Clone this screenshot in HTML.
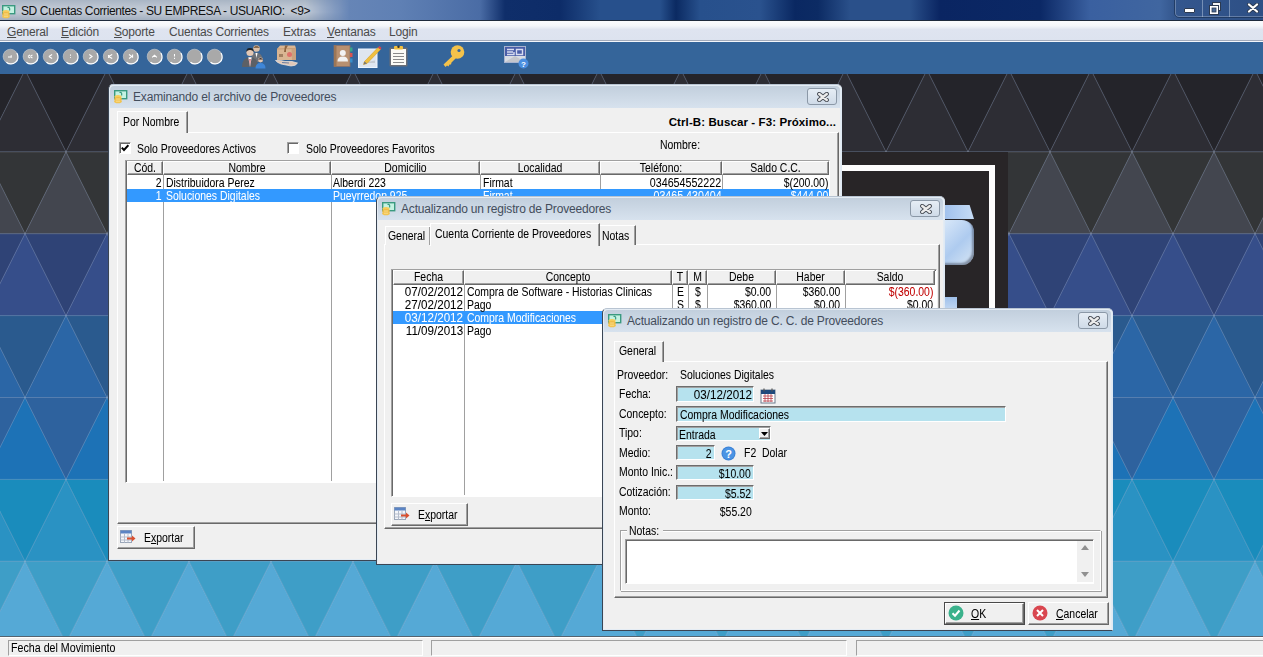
<!DOCTYPE html><html><head><meta charset="utf-8"><style>
*{box-sizing:border-box}
html,body{margin:0;padding:0;width:1263px;height:657px;overflow:hidden;background:#2a4f8f}
body{font-family:"Liberation Sans",sans-serif;font-size:11px;color:#000;position:relative}
.a{position:absolute}
.t{position:absolute;white-space:pre;line-height:13px;letter-spacing:-0.25px}
.d{font-size:12px;letter-spacing:0;transform:scaleX(0.87);transform-origin:0 0;margin-top:1px;-webkit-text-stroke:0.05px currentColor}
.dr{transform-origin:100% 0}
/* title bar */
#tb{left:0;top:0;width:1263px;height:21px;background:linear-gradient(90deg,#6a88b8 0px,#6a88b8 320px,#5f80b4 400px,#4a6ca5 480px,#0f2e6a 505px,#0d2c68 560px,#27508c 600px,#27508c 660px,#0b2a62 676px,#27508c 700px,#2a528e 760px,#0a2862 795px,#0c2b64 818px,#2a508a 850px,#2a508a 910px,#0a2562 940px,#0b2865 1040px,#3a60a0 1090px,#4066a0 1160px,#34578e 1174px,#2d4f85 1263px);border-bottom:1px solid #1e2a3c}
#glow{left:0;top:0;width:350px;height:20px;background:linear-gradient(#a9b5c4 0,#bdc6d2 35%,#c2cad5 60%,#a3afbf 100%);-webkit-mask-image:linear-gradient(90deg,#000 0,#000 305px,rgba(0,0,0,0.5) 325px,transparent 350px)}
#glow2{display:none}
#mb{left:0;top:21px;width:1263px;height:20px;background:linear-gradient(#fafbfd 0%,#f4f6fa 25%,#dfe4f0 45%,#dde3ef 100%);border-bottom:1px solid #a3abbb}
#mb .t{font-size:12px;color:#4a4a4a;letter-spacing:-0.2px}
#tbar{left:0;top:41px;width:1263px;height:33px;background:#35659a;border-top:1px solid #f4f6fa}
.circ{position:absolute;width:15px;height:15px;border-radius:50%;background:#a3a3a3;border:1px solid #e8e8e8;top:49px}
#sb{left:0;top:636px;width:1263px;height:21px;background:#f0f0f0;border-top:1px solid #55636f;box-shadow:inset 0 1px 0 #fff}
.sp{position:absolute;top:3px;height:16px;border:1px solid;border-color:#a0a0a0 #fff #fff #a0a0a0}
/* windows */
.win{position:absolute;background:#f0f0f0;border:1px solid #3b4553;border-right-color:#dfe9f3;border-top-color:#b8c4d2;border-radius:5px 5px 0 0;box-shadow:inset 0 0 0 1px #e4ecf4}
.wt{position:absolute;left:1px;top:1px;right:1px;height:22px;background:linear-gradient(#c2cfdd,#d7e2ee);border-radius:4px 4px 0 0}
.wt .t{font-size:12px;color:#434d5c;left:23px;top:5px;letter-spacing:-0.17px}
.xb{position:absolute;width:30px;height:17px;border:1px solid #8b98a7;border-radius:3px;background:linear-gradient(#e6edf5,#cfdbe8)}
.xb svg{position:absolute;left:8.5px;top:3px}
.ico{position:absolute;left:4px;top:4px;width:16px;height:15px}
.tab{position:absolute;border:1px solid;border-color:#fff #696969 transparent #fff;border-bottom:none;background:#f0f0f0;box-shadow:inset -1px 0 0 #a0a0a0}
.tab .t{top:3px}
.panel{position:absolute;border:1px solid;border-color:#fff #696969 #696969 #fff;box-shadow:inset -1px -1px 0 #a0a0a0}
.grid{position:absolute;background:#fff;border:1px solid;border-color:#a0a0a0 #fff #fff #a0a0a0;box-shadow:inset 1px 1px 0 #696969}
.hd{position:absolute;top:0;height:15px;background:#f0f0f0;border:1px solid;border-color:#fff #696969 #696969 #fff;box-shadow:inset -1px -1px 0 #a0a0a0;text-align:center}
.hd .t, .hd{line-height:13px}
.vl{position:absolute;width:1px;background:#a0a0a0}
.sel{position:absolute;background:#3399ff}
.btn{position:absolute;background:#f0f0f0;border:1px solid;border-color:#fff #696969 #696969 #fff;box-shadow:inset -1px -1px 0 #a0a0a0}
.chk{position:absolute;width:12px;height:12px;background:#fff;border:1px solid;border-color:#a0a0a0 #fff #fff #a0a0a0;box-shadow:inset 1px 1px 0 #696969}
.inp{position:absolute;background:#b6e2ee;border:1px solid;border-color:#6d6d6d #fff #fff #6d6d6d;box-shadow:inset 1px 1px 0 #a0a0a0}
.r{text-align:right}
</style></head><body><svg width="1263" height="657" style="position:absolute;left:0;top:0"><polygon points="-139.0,69.9 -98.0,151.8 -180.0,151.8" fill="#2d2d34"/><polygon points="-139.0,69.9 -57.0,69.9 -98.0,151.8" fill="#24242a"/><polygon points="-57.0,69.9 -16.0,151.8 -98.0,151.8" fill="#2d2d34"/><polygon points="-57.0,69.9 25.0,69.9 -16.0,151.8" fill="#24242a"/><polygon points="25.0,69.9 66.0,151.8 -16.0,151.8" fill="#2d2d34"/><polygon points="25.0,69.9 107.0,69.9 66.0,151.8" fill="#24242a"/><polygon points="107.0,69.9 148.0,151.8 66.0,151.8" fill="#2d2d34"/><polygon points="107.0,69.9 189.0,69.9 148.0,151.8" fill="#24242a"/><polygon points="189.0,69.9 230.0,151.8 148.0,151.8" fill="#2d2d34"/><polygon points="189.0,69.9 271.0,69.9 230.0,151.8" fill="#24242a"/><polygon points="271.0,69.9 312.0,151.8 230.0,151.8" fill="#2d2d34"/><polygon points="271.0,69.9 353.0,69.9 312.0,151.8" fill="#24242a"/><polygon points="353.0,69.9 394.0,151.8 312.0,151.8" fill="#2d2d34"/><polygon points="353.0,69.9 435.0,69.9 394.0,151.8" fill="#24242a"/><polygon points="435.0,69.9 476.0,151.8 394.0,151.8" fill="#2d2d34"/><polygon points="435.0,69.9 517.0,69.9 476.0,151.8" fill="#24242a"/><polygon points="517.0,69.9 558.0,151.8 476.0,151.8" fill="#2d2d34"/><polygon points="517.0,69.9 599.0,69.9 558.0,151.8" fill="#24242a"/><polygon points="599.0,69.9 640.0,151.8 558.0,151.8" fill="#2d2d34"/><polygon points="599.0,69.9 681.0,69.9 640.0,151.8" fill="#24242a"/><polygon points="681.0,69.9 722.0,151.8 640.0,151.8" fill="#2d2d34"/><polygon points="681.0,69.9 763.0,69.9 722.0,151.8" fill="#24242a"/><polygon points="763.0,69.9 804.0,151.8 722.0,151.8" fill="#2d2d34"/><polygon points="763.0,69.9 845.0,69.9 804.0,151.8" fill="#24242a"/><polygon points="845.0,69.9 886.0,151.8 804.0,151.8" fill="#2d2d34"/><polygon points="845.0,69.9 927.0,69.9 886.0,151.8" fill="#24242a"/><polygon points="927.0,69.9 968.0,151.8 886.0,151.8" fill="#2d2d34"/><polygon points="927.0,69.9 1009.0,69.9 968.0,151.8" fill="#24242a"/><polygon points="1009.0,69.9 1050.0,151.8 968.0,151.8" fill="#2d2d34"/><polygon points="1009.0,69.9 1091.0,69.9 1050.0,151.8" fill="#24242a"/><polygon points="1091.0,69.9 1132.0,151.8 1050.0,151.8" fill="#2d2d34"/><polygon points="1091.0,69.9 1173.0,69.9 1132.0,151.8" fill="#24242a"/><polygon points="1173.0,69.9 1214.0,151.8 1132.0,151.8" fill="#2d2d34"/><polygon points="1173.0,69.9 1255.0,69.9 1214.0,151.8" fill="#24242a"/><polygon points="1255.0,69.9 1296.0,151.8 1214.0,151.8" fill="#2d2d34"/><polygon points="1255.0,69.9 1337.0,69.9 1296.0,151.8" fill="#24242a"/><polygon points="1337.0,69.9 1378.0,151.8 1296.0,151.8" fill="#2d2d34"/><polygon points="1337.0,69.9 1419.0,69.9 1378.0,151.8" fill="#24242a"/><polygon points="1419.0,69.9 1460.0,151.8 1378.0,151.8" fill="#2d2d34"/><polygon points="1419.0,69.9 1501.0,69.9 1460.0,151.8" fill="#24242a"/><polygon points="-98.0,151.8 -57.0,233.7 -139.0,233.7" fill="#43464f"/><polygon points="-98.0,151.8 -16.0,151.8 -57.0,233.7" fill="#333537"/><polygon points="-16.0,151.8 25.0,233.7 -57.0,233.7" fill="#43464f"/><polygon points="-16.0,151.8 66.0,151.8 25.0,233.7" fill="#333537"/><polygon points="66.0,151.8 107.0,233.7 25.0,233.7" fill="#43464f"/><polygon points="66.0,151.8 148.0,151.8 107.0,233.7" fill="#333537"/><polygon points="148.0,151.8 189.0,233.7 107.0,233.7" fill="#43464f"/><polygon points="148.0,151.8 230.0,151.8 189.0,233.7" fill="#333537"/><polygon points="230.0,151.8 271.0,233.7 189.0,233.7" fill="#43464f"/><polygon points="230.0,151.8 312.0,151.8 271.0,233.7" fill="#333537"/><polygon points="312.0,151.8 353.0,233.7 271.0,233.7" fill="#43464f"/><polygon points="312.0,151.8 394.0,151.8 353.0,233.7" fill="#333537"/><polygon points="394.0,151.8 435.0,233.7 353.0,233.7" fill="#43464f"/><polygon points="394.0,151.8 476.0,151.8 435.0,233.7" fill="#333537"/><polygon points="476.0,151.8 517.0,233.7 435.0,233.7" fill="#43464f"/><polygon points="476.0,151.8 558.0,151.8 517.0,233.7" fill="#333537"/><polygon points="558.0,151.8 599.0,233.7 517.0,233.7" fill="#43464f"/><polygon points="558.0,151.8 640.0,151.8 599.0,233.7" fill="#333537"/><polygon points="640.0,151.8 681.0,233.7 599.0,233.7" fill="#43464f"/><polygon points="640.0,151.8 722.0,151.8 681.0,233.7" fill="#333537"/><polygon points="722.0,151.8 763.0,233.7 681.0,233.7" fill="#43464f"/><polygon points="722.0,151.8 804.0,151.8 763.0,233.7" fill="#333537"/><polygon points="804.0,151.8 845.0,233.7 763.0,233.7" fill="#43464f"/><polygon points="804.0,151.8 886.0,151.8 845.0,233.7" fill="#333537"/><polygon points="886.0,151.8 927.0,233.7 845.0,233.7" fill="#43464f"/><polygon points="886.0,151.8 968.0,151.8 927.0,233.7" fill="#333537"/><polygon points="968.0,151.8 1009.0,233.7 927.0,233.7" fill="#43464f"/><polygon points="968.0,151.8 1050.0,151.8 1009.0,233.7" fill="#333537"/><polygon points="1050.0,151.8 1091.0,233.7 1009.0,233.7" fill="#43464f"/><polygon points="1050.0,151.8 1132.0,151.8 1091.0,233.7" fill="#333537"/><polygon points="1132.0,151.8 1173.0,233.7 1091.0,233.7" fill="#43464f"/><polygon points="1132.0,151.8 1214.0,151.8 1173.0,233.7" fill="#333537"/><polygon points="1214.0,151.8 1255.0,233.7 1173.0,233.7" fill="#43464f"/><polygon points="1214.0,151.8 1296.0,151.8 1255.0,233.7" fill="#333537"/><polygon points="1296.0,151.8 1337.0,233.7 1255.0,233.7" fill="#43464f"/><polygon points="1296.0,151.8 1378.0,151.8 1337.0,233.7" fill="#333537"/><polygon points="1378.0,151.8 1419.0,233.7 1337.0,233.7" fill="#43464f"/><polygon points="1378.0,151.8 1460.0,151.8 1419.0,233.7" fill="#333537"/><polygon points="1460.0,151.8 1501.0,233.7 1419.0,233.7" fill="#43464f"/><polygon points="1460.0,151.8 1542.0,151.8 1501.0,233.7" fill="#333537"/><polygon points="-139.0,233.7 -98.0,315.6 -180.0,315.6" fill="#364e8a"/><polygon points="-139.0,233.7 -57.0,233.7 -98.0,315.6" fill="#2f4376"/><polygon points="-57.0,233.7 -16.0,315.6 -98.0,315.6" fill="#364e8a"/><polygon points="-57.0,233.7 25.0,233.7 -16.0,315.6" fill="#2f4376"/><polygon points="25.0,233.7 66.0,315.6 -16.0,315.6" fill="#364e8a"/><polygon points="25.0,233.7 107.0,233.7 66.0,315.6" fill="#2f4376"/><polygon points="107.0,233.7 148.0,315.6 66.0,315.6" fill="#364e8a"/><polygon points="107.0,233.7 189.0,233.7 148.0,315.6" fill="#2f4376"/><polygon points="189.0,233.7 230.0,315.6 148.0,315.6" fill="#364e8a"/><polygon points="189.0,233.7 271.0,233.7 230.0,315.6" fill="#2f4376"/><polygon points="271.0,233.7 312.0,315.6 230.0,315.6" fill="#364e8a"/><polygon points="271.0,233.7 353.0,233.7 312.0,315.6" fill="#2f4376"/><polygon points="353.0,233.7 394.0,315.6 312.0,315.6" fill="#364e8a"/><polygon points="353.0,233.7 435.0,233.7 394.0,315.6" fill="#2f4376"/><polygon points="435.0,233.7 476.0,315.6 394.0,315.6" fill="#364e8a"/><polygon points="435.0,233.7 517.0,233.7 476.0,315.6" fill="#2f4376"/><polygon points="517.0,233.7 558.0,315.6 476.0,315.6" fill="#364e8a"/><polygon points="517.0,233.7 599.0,233.7 558.0,315.6" fill="#2f4376"/><polygon points="599.0,233.7 640.0,315.6 558.0,315.6" fill="#364e8a"/><polygon points="599.0,233.7 681.0,233.7 640.0,315.6" fill="#2f4376"/><polygon points="681.0,233.7 722.0,315.6 640.0,315.6" fill="#364e8a"/><polygon points="681.0,233.7 763.0,233.7 722.0,315.6" fill="#2f4376"/><polygon points="763.0,233.7 804.0,315.6 722.0,315.6" fill="#364e8a"/><polygon points="763.0,233.7 845.0,233.7 804.0,315.6" fill="#2f4376"/><polygon points="845.0,233.7 886.0,315.6 804.0,315.6" fill="#364e8a"/><polygon points="845.0,233.7 927.0,233.7 886.0,315.6" fill="#2f4376"/><polygon points="927.0,233.7 968.0,315.6 886.0,315.6" fill="#364e8a"/><polygon points="927.0,233.7 1009.0,233.7 968.0,315.6" fill="#2f4376"/><polygon points="1009.0,233.7 1050.0,315.6 968.0,315.6" fill="#364e8a"/><polygon points="1009.0,233.7 1091.0,233.7 1050.0,315.6" fill="#2f4376"/><polygon points="1091.0,233.7 1132.0,315.6 1050.0,315.6" fill="#364e8a"/><polygon points="1091.0,233.7 1173.0,233.7 1132.0,315.6" fill="#2f4376"/><polygon points="1173.0,233.7 1214.0,315.6 1132.0,315.6" fill="#364e8a"/><polygon points="1173.0,233.7 1255.0,233.7 1214.0,315.6" fill="#2f4376"/><polygon points="1255.0,233.7 1296.0,315.6 1214.0,315.6" fill="#364e8a"/><polygon points="1255.0,233.7 1337.0,233.7 1296.0,315.6" fill="#2f4376"/><polygon points="1337.0,233.7 1378.0,315.6 1296.0,315.6" fill="#364e8a"/><polygon points="1337.0,233.7 1419.0,233.7 1378.0,315.6" fill="#2f4376"/><polygon points="1419.0,233.7 1460.0,315.6 1378.0,315.6" fill="#364e8a"/><polygon points="1419.0,233.7 1501.0,233.7 1460.0,315.6" fill="#2f4376"/><polygon points="-98.0,315.6 -57.0,397.5 -139.0,397.5" fill="#2b66a6"/><polygon points="-98.0,315.6 -16.0,315.6 -57.0,397.5" fill="#2a5a8e"/><polygon points="-16.0,315.6 25.0,397.5 -57.0,397.5" fill="#2b66a6"/><polygon points="-16.0,315.6 66.0,315.6 25.0,397.5" fill="#2a5a8e"/><polygon points="66.0,315.6 107.0,397.5 25.0,397.5" fill="#2b66a6"/><polygon points="66.0,315.6 148.0,315.6 107.0,397.5" fill="#2a5a8e"/><polygon points="148.0,315.6 189.0,397.5 107.0,397.5" fill="#2b66a6"/><polygon points="148.0,315.6 230.0,315.6 189.0,397.5" fill="#2a5a8e"/><polygon points="230.0,315.6 271.0,397.5 189.0,397.5" fill="#2b66a6"/><polygon points="230.0,315.6 312.0,315.6 271.0,397.5" fill="#2a5a8e"/><polygon points="312.0,315.6 353.0,397.5 271.0,397.5" fill="#2b66a6"/><polygon points="312.0,315.6 394.0,315.6 353.0,397.5" fill="#2a5a8e"/><polygon points="394.0,315.6 435.0,397.5 353.0,397.5" fill="#2b66a6"/><polygon points="394.0,315.6 476.0,315.6 435.0,397.5" fill="#2a5a8e"/><polygon points="476.0,315.6 517.0,397.5 435.0,397.5" fill="#2b66a6"/><polygon points="476.0,315.6 558.0,315.6 517.0,397.5" fill="#2a5a8e"/><polygon points="558.0,315.6 599.0,397.5 517.0,397.5" fill="#2b66a6"/><polygon points="558.0,315.6 640.0,315.6 599.0,397.5" fill="#2a5a8e"/><polygon points="640.0,315.6 681.0,397.5 599.0,397.5" fill="#2b66a6"/><polygon points="640.0,315.6 722.0,315.6 681.0,397.5" fill="#2a5a8e"/><polygon points="722.0,315.6 763.0,397.5 681.0,397.5" fill="#2b66a6"/><polygon points="722.0,315.6 804.0,315.6 763.0,397.5" fill="#2a5a8e"/><polygon points="804.0,315.6 845.0,397.5 763.0,397.5" fill="#2b66a6"/><polygon points="804.0,315.6 886.0,315.6 845.0,397.5" fill="#2a5a8e"/><polygon points="886.0,315.6 927.0,397.5 845.0,397.5" fill="#2b66a6"/><polygon points="886.0,315.6 968.0,315.6 927.0,397.5" fill="#2a5a8e"/><polygon points="968.0,315.6 1009.0,397.5 927.0,397.5" fill="#2b66a6"/><polygon points="968.0,315.6 1050.0,315.6 1009.0,397.5" fill="#2a5a8e"/><polygon points="1050.0,315.6 1091.0,397.5 1009.0,397.5" fill="#2b66a6"/><polygon points="1050.0,315.6 1132.0,315.6 1091.0,397.5" fill="#2a5a8e"/><polygon points="1132.0,315.6 1173.0,397.5 1091.0,397.5" fill="#2b66a6"/><polygon points="1132.0,315.6 1214.0,315.6 1173.0,397.5" fill="#2a5a8e"/><polygon points="1214.0,315.6 1255.0,397.5 1173.0,397.5" fill="#2b66a6"/><polygon points="1214.0,315.6 1296.0,315.6 1255.0,397.5" fill="#2a5a8e"/><polygon points="1296.0,315.6 1337.0,397.5 1255.0,397.5" fill="#2b66a6"/><polygon points="1296.0,315.6 1378.0,315.6 1337.0,397.5" fill="#2a5a8e"/><polygon points="1378.0,315.6 1419.0,397.5 1337.0,397.5" fill="#2b66a6"/><polygon points="1378.0,315.6 1460.0,315.6 1419.0,397.5" fill="#2a5a8e"/><polygon points="1460.0,315.6 1501.0,397.5 1419.0,397.5" fill="#2b66a6"/><polygon points="1460.0,315.6 1542.0,315.6 1501.0,397.5" fill="#2a5a8e"/><polygon points="-139.0,397.5 -98.0,479.4 -180.0,479.4" fill="#1d72b6"/><polygon points="-139.0,397.5 -57.0,397.5 -98.0,479.4" fill="#2e629e"/><polygon points="-57.0,397.5 -16.0,479.4 -98.0,479.4" fill="#1d72b6"/><polygon points="-57.0,397.5 25.0,397.5 -16.0,479.4" fill="#2e629e"/><polygon points="25.0,397.5 66.0,479.4 -16.0,479.4" fill="#1d72b6"/><polygon points="25.0,397.5 107.0,397.5 66.0,479.4" fill="#2e629e"/><polygon points="107.0,397.5 148.0,479.4 66.0,479.4" fill="#1d72b6"/><polygon points="107.0,397.5 189.0,397.5 148.0,479.4" fill="#2e629e"/><polygon points="189.0,397.5 230.0,479.4 148.0,479.4" fill="#1d72b6"/><polygon points="189.0,397.5 271.0,397.5 230.0,479.4" fill="#2e629e"/><polygon points="271.0,397.5 312.0,479.4 230.0,479.4" fill="#1d72b6"/><polygon points="271.0,397.5 353.0,397.5 312.0,479.4" fill="#2e629e"/><polygon points="353.0,397.5 394.0,479.4 312.0,479.4" fill="#1d72b6"/><polygon points="353.0,397.5 435.0,397.5 394.0,479.4" fill="#2e629e"/><polygon points="435.0,397.5 476.0,479.4 394.0,479.4" fill="#1d72b6"/><polygon points="435.0,397.5 517.0,397.5 476.0,479.4" fill="#2e629e"/><polygon points="517.0,397.5 558.0,479.4 476.0,479.4" fill="#1d72b6"/><polygon points="517.0,397.5 599.0,397.5 558.0,479.4" fill="#2e629e"/><polygon points="599.0,397.5 640.0,479.4 558.0,479.4" fill="#1d72b6"/><polygon points="599.0,397.5 681.0,397.5 640.0,479.4" fill="#2e629e"/><polygon points="681.0,397.5 722.0,479.4 640.0,479.4" fill="#1d72b6"/><polygon points="681.0,397.5 763.0,397.5 722.0,479.4" fill="#2e629e"/><polygon points="763.0,397.5 804.0,479.4 722.0,479.4" fill="#1d72b6"/><polygon points="763.0,397.5 845.0,397.5 804.0,479.4" fill="#2e629e"/><polygon points="845.0,397.5 886.0,479.4 804.0,479.4" fill="#1d72b6"/><polygon points="845.0,397.5 927.0,397.5 886.0,479.4" fill="#2e629e"/><polygon points="927.0,397.5 968.0,479.4 886.0,479.4" fill="#1d72b6"/><polygon points="927.0,397.5 1009.0,397.5 968.0,479.4" fill="#2e629e"/><polygon points="1009.0,397.5 1050.0,479.4 968.0,479.4" fill="#1d72b6"/><polygon points="1009.0,397.5 1091.0,397.5 1050.0,479.4" fill="#2e629e"/><polygon points="1091.0,397.5 1132.0,479.4 1050.0,479.4" fill="#1d72b6"/><polygon points="1091.0,397.5 1173.0,397.5 1132.0,479.4" fill="#2e629e"/><polygon points="1173.0,397.5 1214.0,479.4 1132.0,479.4" fill="#1d72b6"/><polygon points="1173.0,397.5 1255.0,397.5 1214.0,479.4" fill="#2e629e"/><polygon points="1255.0,397.5 1296.0,479.4 1214.0,479.4" fill="#1d72b6"/><polygon points="1255.0,397.5 1337.0,397.5 1296.0,479.4" fill="#2e629e"/><polygon points="1337.0,397.5 1378.0,479.4 1296.0,479.4" fill="#1d72b6"/><polygon points="1337.0,397.5 1419.0,397.5 1378.0,479.4" fill="#2e629e"/><polygon points="1419.0,397.5 1460.0,479.4 1378.0,479.4" fill="#1d72b6"/><polygon points="1419.0,397.5 1501.0,397.5 1460.0,479.4" fill="#2e629e"/><polygon points="-98.0,479.4 -57.0,561.3 -139.0,561.3" fill="#2a92c3"/><polygon points="-98.0,479.4 -16.0,479.4 -57.0,561.3" fill="#1a8cbc"/><polygon points="-16.0,479.4 25.0,561.3 -57.0,561.3" fill="#2a92c3"/><polygon points="-16.0,479.4 66.0,479.4 25.0,561.3" fill="#1a8cbc"/><polygon points="66.0,479.4 107.0,561.3 25.0,561.3" fill="#2a92c3"/><polygon points="66.0,479.4 148.0,479.4 107.0,561.3" fill="#1a8cbc"/><polygon points="148.0,479.4 189.0,561.3 107.0,561.3" fill="#2a92c3"/><polygon points="148.0,479.4 230.0,479.4 189.0,561.3" fill="#1a8cbc"/><polygon points="230.0,479.4 271.0,561.3 189.0,561.3" fill="#2a92c3"/><polygon points="230.0,479.4 312.0,479.4 271.0,561.3" fill="#1a8cbc"/><polygon points="312.0,479.4 353.0,561.3 271.0,561.3" fill="#2a92c3"/><polygon points="312.0,479.4 394.0,479.4 353.0,561.3" fill="#1a8cbc"/><polygon points="394.0,479.4 435.0,561.3 353.0,561.3" fill="#2a92c3"/><polygon points="394.0,479.4 476.0,479.4 435.0,561.3" fill="#1a8cbc"/><polygon points="476.0,479.4 517.0,561.3 435.0,561.3" fill="#2a92c3"/><polygon points="476.0,479.4 558.0,479.4 517.0,561.3" fill="#1a8cbc"/><polygon points="558.0,479.4 599.0,561.3 517.0,561.3" fill="#2a92c3"/><polygon points="558.0,479.4 640.0,479.4 599.0,561.3" fill="#1a8cbc"/><polygon points="640.0,479.4 681.0,561.3 599.0,561.3" fill="#2a92c3"/><polygon points="640.0,479.4 722.0,479.4 681.0,561.3" fill="#1a8cbc"/><polygon points="722.0,479.4 763.0,561.3 681.0,561.3" fill="#2a92c3"/><polygon points="722.0,479.4 804.0,479.4 763.0,561.3" fill="#1a8cbc"/><polygon points="804.0,479.4 845.0,561.3 763.0,561.3" fill="#2a92c3"/><polygon points="804.0,479.4 886.0,479.4 845.0,561.3" fill="#1a8cbc"/><polygon points="886.0,479.4 927.0,561.3 845.0,561.3" fill="#2a92c3"/><polygon points="886.0,479.4 968.0,479.4 927.0,561.3" fill="#1a8cbc"/><polygon points="968.0,479.4 1009.0,561.3 927.0,561.3" fill="#2a92c3"/><polygon points="968.0,479.4 1050.0,479.4 1009.0,561.3" fill="#1a8cbc"/><polygon points="1050.0,479.4 1091.0,561.3 1009.0,561.3" fill="#2a92c3"/><polygon points="1050.0,479.4 1132.0,479.4 1091.0,561.3" fill="#1a8cbc"/><polygon points="1132.0,479.4 1173.0,561.3 1091.0,561.3" fill="#2a92c3"/><polygon points="1132.0,479.4 1214.0,479.4 1173.0,561.3" fill="#1a8cbc"/><polygon points="1214.0,479.4 1255.0,561.3 1173.0,561.3" fill="#2a92c3"/><polygon points="1214.0,479.4 1296.0,479.4 1255.0,561.3" fill="#1a8cbc"/><polygon points="1296.0,479.4 1337.0,561.3 1255.0,561.3" fill="#2a92c3"/><polygon points="1296.0,479.4 1378.0,479.4 1337.0,561.3" fill="#1a8cbc"/><polygon points="1378.0,479.4 1419.0,561.3 1337.0,561.3" fill="#2a92c3"/><polygon points="1378.0,479.4 1460.0,479.4 1419.0,561.3" fill="#1a8cbc"/><polygon points="1460.0,479.4 1501.0,561.3 1419.0,561.3" fill="#2a92c3"/><polygon points="1460.0,479.4 1542.0,479.4 1501.0,561.3" fill="#1a8cbc"/><polygon points="-139.0,561.3 -98.0,643.2 -180.0,643.2" fill="#55a9d6"/><polygon points="-139.0,561.3 -57.0,561.3 -98.0,643.2" fill="#3e9ec7"/><polygon points="-57.0,561.3 -16.0,643.2 -98.0,643.2" fill="#55a9d6"/><polygon points="-57.0,561.3 25.0,561.3 -16.0,643.2" fill="#3e9ec7"/><polygon points="25.0,561.3 66.0,643.2 -16.0,643.2" fill="#55a9d6"/><polygon points="25.0,561.3 107.0,561.3 66.0,643.2" fill="#3e9ec7"/><polygon points="107.0,561.3 148.0,643.2 66.0,643.2" fill="#55a9d6"/><polygon points="107.0,561.3 189.0,561.3 148.0,643.2" fill="#3e9ec7"/><polygon points="189.0,561.3 230.0,643.2 148.0,643.2" fill="#55a9d6"/><polygon points="189.0,561.3 271.0,561.3 230.0,643.2" fill="#3e9ec7"/><polygon points="271.0,561.3 312.0,643.2 230.0,643.2" fill="#55a9d6"/><polygon points="271.0,561.3 353.0,561.3 312.0,643.2" fill="#3e9ec7"/><polygon points="353.0,561.3 394.0,643.2 312.0,643.2" fill="#55a9d6"/><polygon points="353.0,561.3 435.0,561.3 394.0,643.2" fill="#3e9ec7"/><polygon points="435.0,561.3 476.0,643.2 394.0,643.2" fill="#55a9d6"/><polygon points="435.0,561.3 517.0,561.3 476.0,643.2" fill="#3e9ec7"/><polygon points="517.0,561.3 558.0,643.2 476.0,643.2" fill="#55a9d6"/><polygon points="517.0,561.3 599.0,561.3 558.0,643.2" fill="#3e9ec7"/><polygon points="599.0,561.3 640.0,643.2 558.0,643.2" fill="#55a9d6"/><polygon points="599.0,561.3 681.0,561.3 640.0,643.2" fill="#3e9ec7"/><polygon points="681.0,561.3 722.0,643.2 640.0,643.2" fill="#55a9d6"/><polygon points="681.0,561.3 763.0,561.3 722.0,643.2" fill="#3e9ec7"/><polygon points="763.0,561.3 804.0,643.2 722.0,643.2" fill="#55a9d6"/><polygon points="763.0,561.3 845.0,561.3 804.0,643.2" fill="#3e9ec7"/><polygon points="845.0,561.3 886.0,643.2 804.0,643.2" fill="#55a9d6"/><polygon points="845.0,561.3 927.0,561.3 886.0,643.2" fill="#3e9ec7"/><polygon points="927.0,561.3 968.0,643.2 886.0,643.2" fill="#55a9d6"/><polygon points="927.0,561.3 1009.0,561.3 968.0,643.2" fill="#3e9ec7"/><polygon points="1009.0,561.3 1050.0,643.2 968.0,643.2" fill="#55a9d6"/><polygon points="1009.0,561.3 1091.0,561.3 1050.0,643.2" fill="#3e9ec7"/><polygon points="1091.0,561.3 1132.0,643.2 1050.0,643.2" fill="#55a9d6"/><polygon points="1091.0,561.3 1173.0,561.3 1132.0,643.2" fill="#3e9ec7"/><polygon points="1173.0,561.3 1214.0,643.2 1132.0,643.2" fill="#55a9d6"/><polygon points="1173.0,561.3 1255.0,561.3 1214.0,643.2" fill="#3e9ec7"/><polygon points="1255.0,561.3 1296.0,643.2 1214.0,643.2" fill="#55a9d6"/><polygon points="1255.0,561.3 1337.0,561.3 1296.0,643.2" fill="#3e9ec7"/><polygon points="1337.0,561.3 1378.0,643.2 1296.0,643.2" fill="#55a9d6"/><polygon points="1337.0,561.3 1419.0,561.3 1378.0,643.2" fill="#3e9ec7"/><polygon points="1419.0,561.3 1460.0,643.2 1378.0,643.2" fill="#55a9d6"/><polygon points="1419.0,561.3 1501.0,561.3 1460.0,643.2" fill="#3e9ec7"/><polygon points="-98.0,643.2 -57.0,725.1 -139.0,725.1" fill="#55a9d6"/><polygon points="-98.0,643.2 -16.0,643.2 -57.0,725.1" fill="#3e9ec7"/><polygon points="-16.0,643.2 25.0,725.1 -57.0,725.1" fill="#55a9d6"/><polygon points="-16.0,643.2 66.0,643.2 25.0,725.1" fill="#3e9ec7"/><polygon points="66.0,643.2 107.0,725.1 25.0,725.1" fill="#55a9d6"/><polygon points="66.0,643.2 148.0,643.2 107.0,725.1" fill="#3e9ec7"/><polygon points="148.0,643.2 189.0,725.1 107.0,725.1" fill="#55a9d6"/><polygon points="148.0,643.2 230.0,643.2 189.0,725.1" fill="#3e9ec7"/><polygon points="230.0,643.2 271.0,725.1 189.0,725.1" fill="#55a9d6"/><polygon points="230.0,643.2 312.0,643.2 271.0,725.1" fill="#3e9ec7"/><polygon points="312.0,643.2 353.0,725.1 271.0,725.1" fill="#55a9d6"/><polygon points="312.0,643.2 394.0,643.2 353.0,725.1" fill="#3e9ec7"/><polygon points="394.0,643.2 435.0,725.1 353.0,725.1" fill="#55a9d6"/><polygon points="394.0,643.2 476.0,643.2 435.0,725.1" fill="#3e9ec7"/><polygon points="476.0,643.2 517.0,725.1 435.0,725.1" fill="#55a9d6"/><polygon points="476.0,643.2 558.0,643.2 517.0,725.1" fill="#3e9ec7"/><polygon points="558.0,643.2 599.0,725.1 517.0,725.1" fill="#55a9d6"/><polygon points="558.0,643.2 640.0,643.2 599.0,725.1" fill="#3e9ec7"/><polygon points="640.0,643.2 681.0,725.1 599.0,725.1" fill="#55a9d6"/><polygon points="640.0,643.2 722.0,643.2 681.0,725.1" fill="#3e9ec7"/><polygon points="722.0,643.2 763.0,725.1 681.0,725.1" fill="#55a9d6"/><polygon points="722.0,643.2 804.0,643.2 763.0,725.1" fill="#3e9ec7"/><polygon points="804.0,643.2 845.0,725.1 763.0,725.1" fill="#55a9d6"/><polygon points="804.0,643.2 886.0,643.2 845.0,725.1" fill="#3e9ec7"/><polygon points="886.0,643.2 927.0,725.1 845.0,725.1" fill="#55a9d6"/><polygon points="886.0,643.2 968.0,643.2 927.0,725.1" fill="#3e9ec7"/><polygon points="968.0,643.2 1009.0,725.1 927.0,725.1" fill="#55a9d6"/><polygon points="968.0,643.2 1050.0,643.2 1009.0,725.1" fill="#3e9ec7"/><polygon points="1050.0,643.2 1091.0,725.1 1009.0,725.1" fill="#55a9d6"/><polygon points="1050.0,643.2 1132.0,643.2 1091.0,725.1" fill="#3e9ec7"/><polygon points="1132.0,643.2 1173.0,725.1 1091.0,725.1" fill="#55a9d6"/><polygon points="1132.0,643.2 1214.0,643.2 1173.0,725.1" fill="#3e9ec7"/><polygon points="1214.0,643.2 1255.0,725.1 1173.0,725.1" fill="#55a9d6"/><polygon points="1214.0,643.2 1296.0,643.2 1255.0,725.1" fill="#3e9ec7"/><polygon points="1296.0,643.2 1337.0,725.1 1255.0,725.1" fill="#55a9d6"/><polygon points="1296.0,643.2 1378.0,643.2 1337.0,725.1" fill="#3e9ec7"/><polygon points="1378.0,643.2 1419.0,725.1 1337.0,725.1" fill="#55a9d6"/><polygon points="1378.0,643.2 1460.0,643.2 1419.0,725.1" fill="#3e9ec7"/><polygon points="1460.0,643.2 1501.0,725.1 1419.0,725.1" fill="#55a9d6"/><polygon points="1460.0,643.2 1542.0,643.2 1501.0,725.1" fill="#3e9ec7"/><g stroke="rgba(255,255,255,0.2)" stroke-width="1"><line x1="0" y1="69.9" x2="1263" y2="69.9"/><line x1="0" y1="151.8" x2="1263" y2="151.8"/><line x1="0" y1="233.7" x2="1263" y2="233.7"/><line x1="0" y1="315.6" x2="1263" y2="315.6"/><line x1="0" y1="397.5" x2="1263" y2="397.5"/><line x1="0" y1="479.4" x2="1263" y2="479.4"/><line x1="0" y1="561.3" x2="1263" y2="561.3"/><line x1="0" y1="643.2" x2="1263" y2="643.2"/><line x1="0" y1="725.1" x2="1263" y2="725.1"/><line x1="-959.0" y1="69.9" x2="-631.0" y2="725.1"/><line x1="-959.0" y1="69.9" x2="-1287.0" y2="725.1"/><line x1="-877.0" y1="69.9" x2="-549.0" y2="725.1"/><line x1="-877.0" y1="69.9" x2="-1205.0" y2="725.1"/><line x1="-795.0" y1="69.9" x2="-467.0" y2="725.1"/><line x1="-795.0" y1="69.9" x2="-1123.0" y2="725.1"/><line x1="-713.0" y1="69.9" x2="-385.0" y2="725.1"/><line x1="-713.0" y1="69.9" x2="-1041.0" y2="725.1"/><line x1="-631.0" y1="69.9" x2="-303.0" y2="725.1"/><line x1="-631.0" y1="69.9" x2="-959.0" y2="725.1"/><line x1="-549.0" y1="69.9" x2="-221.0" y2="725.1"/><line x1="-549.0" y1="69.9" x2="-877.0" y2="725.1"/><line x1="-467.0" y1="69.9" x2="-139.0" y2="725.1"/><line x1="-467.0" y1="69.9" x2="-795.0" y2="725.1"/><line x1="-385.0" y1="69.9" x2="-57.0" y2="725.1"/><line x1="-385.0" y1="69.9" x2="-713.0" y2="725.1"/><line x1="-303.0" y1="69.9" x2="25.0" y2="725.1"/><line x1="-303.0" y1="69.9" x2="-631.0" y2="725.1"/><line x1="-221.0" y1="69.9" x2="107.0" y2="725.1"/><line x1="-221.0" y1="69.9" x2="-549.0" y2="725.1"/><line x1="-139.0" y1="69.9" x2="189.0" y2="725.1"/><line x1="-139.0" y1="69.9" x2="-467.0" y2="725.1"/><line x1="-57.0" y1="69.9" x2="271.0" y2="725.1"/><line x1="-57.0" y1="69.9" x2="-385.0" y2="725.1"/><line x1="25.0" y1="69.9" x2="353.0" y2="725.1"/><line x1="25.0" y1="69.9" x2="-303.0" y2="725.1"/><line x1="107.0" y1="69.9" x2="435.0" y2="725.1"/><line x1="107.0" y1="69.9" x2="-221.0" y2="725.1"/><line x1="189.0" y1="69.9" x2="517.0" y2="725.1"/><line x1="189.0" y1="69.9" x2="-139.0" y2="725.1"/><line x1="271.0" y1="69.9" x2="599.0" y2="725.1"/><line x1="271.0" y1="69.9" x2="-57.0" y2="725.1"/><line x1="353.0" y1="69.9" x2="681.0" y2="725.1"/><line x1="353.0" y1="69.9" x2="25.0" y2="725.1"/><line x1="435.0" y1="69.9" x2="763.0" y2="725.1"/><line x1="435.0" y1="69.9" x2="107.0" y2="725.1"/><line x1="517.0" y1="69.9" x2="845.0" y2="725.1"/><line x1="517.0" y1="69.9" x2="189.0" y2="725.1"/><line x1="599.0" y1="69.9" x2="927.0" y2="725.1"/><line x1="599.0" y1="69.9" x2="271.0" y2="725.1"/><line x1="681.0" y1="69.9" x2="1009.0" y2="725.1"/><line x1="681.0" y1="69.9" x2="353.0" y2="725.1"/><line x1="763.0" y1="69.9" x2="1091.0" y2="725.1"/><line x1="763.0" y1="69.9" x2="435.0" y2="725.1"/><line x1="845.0" y1="69.9" x2="1173.0" y2="725.1"/><line x1="845.0" y1="69.9" x2="517.0" y2="725.1"/><line x1="927.0" y1="69.9" x2="1255.0" y2="725.1"/><line x1="927.0" y1="69.9" x2="599.0" y2="725.1"/><line x1="1009.0" y1="69.9" x2="1337.0" y2="725.1"/><line x1="1009.0" y1="69.9" x2="681.0" y2="725.1"/><line x1="1091.0" y1="69.9" x2="1419.0" y2="725.1"/><line x1="1091.0" y1="69.9" x2="763.0" y2="725.1"/><line x1="1173.0" y1="69.9" x2="1501.0" y2="725.1"/><line x1="1173.0" y1="69.9" x2="845.0" y2="725.1"/><line x1="1255.0" y1="69.9" x2="1583.0" y2="725.1"/><line x1="1255.0" y1="69.9" x2="927.0" y2="725.1"/><line x1="1337.0" y1="69.9" x2="1665.0" y2="725.1"/><line x1="1337.0" y1="69.9" x2="1009.0" y2="725.1"/><line x1="1419.0" y1="69.9" x2="1747.0" y2="725.1"/><line x1="1419.0" y1="69.9" x2="1091.0" y2="725.1"/><line x1="1501.0" y1="69.9" x2="1829.0" y2="725.1"/><line x1="1501.0" y1="69.9" x2="1173.0" y2="725.1"/><line x1="1583.0" y1="69.9" x2="1911.0" y2="725.1"/><line x1="1583.0" y1="69.9" x2="1255.0" y2="725.1"/></g></svg>
<div class="a" id="tb"></div><div class="a" id="glow"></div><div class="a" id="glow2"></div>
<svg class="a" style="left:1px;top:4px" width="16" height="15" viewBox="0 0 16 15"><rect x="1.7" y="1.7" width="12" height="8" fill="#c4f2e2" stroke="#3a9a80" stroke-width="1.4"/><path d="M6.5 3.5 Q9.5 3 8.5 6.5" stroke="#3a9a80" stroke-width="1.2" fill="none"/><ellipse cx="5" cy="7.8" rx="3.6" ry="1.9" fill="#f6cc5a"/><ellipse cx="5" cy="10" rx="3.8" ry="2" fill="#eebb48"/><ellipse cx="5" cy="12.2" rx="3.8" ry="2" fill="#f2c452"/><path d="M3 10h4M3 12.2h4" stroke="#fbe39a" stroke-width="0.8"/></svg>
<div class="t" style="left:21px;top:5.3px;font-size:12px;letter-spacing:-0.38px;color:#101010">SD Cuentas Corrientes - SU EMPRESA - USUARIO:  &lt;9&gt;</div>
<div class="a" style="left:1174px;top:-2px;width:92px;height:20px;border:1px solid rgba(20,40,70,0.55);border-radius:0 0 0 5px;box-shadow:inset 0 0 0 1px rgba(255,255,255,0.25)"></div>
<div class="a" style="left:1202px;top:0;width:1px;height:17px;background:rgba(200,215,235,0.45)"></div>
<div class="a" style="left:1229px;top:0;width:1px;height:17px;background:rgba(200,215,235,0.45)"></div>
<div class="a" style="left:1184px;top:8px;width:11px;height:5px;background:#fff;border:1px solid #2c3a50;border-radius:1px"></div>
<svg class="a" style="left:1208px;top:2px" width="14" height="13" viewBox="0 0 14 13"><rect x="4.5" y="0.5" width="8" height="8" fill="#f4f4f4" stroke="#2c3a50"/><rect x="1.5" y="3.5" width="9" height="9" fill="#fff" stroke="#2c3a50"/><rect x="4" y="6" width="4" height="4" fill="#4a6a96" stroke="#2c3a50" stroke-width="0.8"/></svg>
<svg class="a" style="left:1247px;top:3px" width="12" height="10" viewBox="0 0 12 10"><path d="M2 1.5L10 8.5M10 1.5L2 8.5" stroke="#2c3a50" stroke-width="3.8" stroke-linecap="round"/><path d="M2 1.5L10 8.5M10 1.5L2 8.5" stroke="#fff" stroke-width="2.2" stroke-linecap="round"/></svg>
<div class="a" id="mb"><div class="t" style="left:7px;top:4.5px;"><u>G</u>eneral</div><div class="t" style="left:61px;top:4.5px;"><u>E</u>dición</div><div class="t" style="left:114px;top:4.5px;"><u>S</u>oporte</div><div class="t" style="left:169px;top:4.5px;">Cuentas Corrientes</div><div class="t" style="left:283px;top:4.5px;">Extras</div><div class="t" style="left:327px;top:4.5px;"><u>V</u>entanas</div><div class="t" style="left:389px;top:4.5px;">Login</div></div>
<div class="a" id="tbar"></div>
<svg class="a" style="left:0;top:46px" width="230" height="22"><circle cx="10.4" cy="10.5" r="7.3" fill="#a9a9a9" stroke="#c8ccd4" stroke-width="0.6"/><path d="M16.8 7 A7 7 0 0 1 6.4 16.2" stroke="#fff" stroke-width="1.2" fill="none"/><g transform="translate(10.4,10.5)"><path d="M-3 0.5h4M1 -1.5v3" transform="scale(0.8)" stroke="#fff" stroke-width="1.3" fill="none"/></g><circle cx="30.4" cy="10.5" r="7.3" fill="#a9a9a9" stroke="#c8ccd4" stroke-width="0.6"/><path d="M36.8 7 A7 7 0 0 1 26.4 16.2" stroke="#fff" stroke-width="1.2" fill="none"/><g transform="translate(30.4,10.5)"><path d="M-3 0L-0.5 -2M-3 0L-0.5 2M0 0L2.5 -2M0 0L2.5 2" transform="scale(0.8)" stroke="#fff" stroke-width="1.3" fill="none"/></g><circle cx="50.5" cy="10.5" r="7.3" fill="#a9a9a9" stroke="#c8ccd4" stroke-width="0.6"/><path d="M56.9 7 A7 7 0 0 1 46.5 16.2" stroke="#fff" stroke-width="1.2" fill="none"/><g transform="translate(50.5,10.5)"><path d="M-2 0L2 -2.5M-2 0L2 2.5" transform="scale(0.8)" stroke="#fff" stroke-width="1.3" fill="none"/></g><circle cx="70.5" cy="10.5" r="7.3" fill="#a9a9a9" stroke="#c8ccd4" stroke-width="0.6"/><path d="M76.9 7 A7 7 0 0 1 66.5 16.2" stroke="#fff" stroke-width="1.2" fill="none"/><g transform="translate(70.5,10.5)"><path d="M0 -2.5v1.5M0 1v1" transform="scale(0.8)" stroke="#fff" stroke-width="1.3" fill="none"/></g><circle cx="90.5" cy="10.5" r="7.3" fill="#a9a9a9" stroke="#c8ccd4" stroke-width="0.6"/><path d="M96.9 7 A7 7 0 0 1 86.5 16.2" stroke="#fff" stroke-width="1.2" fill="none"/><g transform="translate(90.5,10.5)"><path d="M-1.5 -2.5L2 0L-1.5 2.5" transform="scale(0.8)" stroke="#fff" stroke-width="1.3" fill="none"/></g><circle cx="110.6" cy="10.5" r="7.3" fill="#a9a9a9" stroke="#c8ccd4" stroke-width="0.6"/><path d="M117.0 7 A7 7 0 0 1 106.6 16.2" stroke="#fff" stroke-width="1.2" fill="none"/><g transform="translate(110.6,10.5)"><path d="M-2.5 -2v4M-2.5 0L2 -2.5M-2.5 0L2 2.5" transform="scale(0.8)" stroke="#fff" stroke-width="1.3" fill="none"/></g><circle cx="130.6" cy="10.5" r="7.3" fill="#a9a9a9" stroke="#c8ccd4" stroke-width="0.6"/><path d="M137.0 7 A7 7 0 0 1 126.6 16.2" stroke="#fff" stroke-width="1.2" fill="none"/><g transform="translate(130.6,10.5)"><path d="M-2 -2.5L1.5 0L-2 2.5M2.5 -2.5v4" transform="scale(0.8)" stroke="#fff" stroke-width="1.3" fill="none"/></g><circle cx="154.5" cy="10.5" r="7.3" fill="#a9a9a9" stroke="#c8ccd4" stroke-width="0.6"/><path d="M160.9 7 A7 7 0 0 1 150.5 16.2" stroke="#fff" stroke-width="1.2" fill="none"/><g transform="translate(154.5,10.5)"><path d="M-3 1L0 -1.5L3 1" transform="scale(0.8)" stroke="#fff" stroke-width="1.3" fill="none"/></g><circle cx="174.5" cy="10.5" r="7.3" fill="#a9a9a9" stroke="#c8ccd4" stroke-width="0.6"/><path d="M180.9 7 A7 7 0 0 1 170.5 16.2" stroke="#fff" stroke-width="1.2" fill="none"/><g transform="translate(174.5,10.5)"><path d="M0 -3v3M0 1.5v1.5" transform="scale(0.8)" stroke="#fff" stroke-width="1.3" fill="none"/></g><circle cx="194.5" cy="10.5" r="7.3" fill="#a9a9a9" stroke="#c8ccd4" stroke-width="0.6"/><path d="M200.9 7 A7 7 0 0 1 190.5 16.2" stroke="#fff" stroke-width="1.2" fill="none"/><circle cx="214.6" cy="10.5" r="7.3" fill="#a9a9a9" stroke="#c8ccd4" stroke-width="0.6"/><path d="M221.0 7 A7 7 0 0 1 210.6 16.2" stroke="#fff" stroke-width="1.2" fill="none"/></svg>
<svg class="a" style="left:242px;top:44px" width="25" height="25" viewBox="0 0 25 25">
<circle cx="14.5" cy="4.5" r="3.3" fill="#dcc0a8"/><path d="M11.2 4 Q14.5 -0.5 17.8 4 Z" fill="#8a6a4c"/>
<path d="M9 18 Q9 9 14.5 8.5 Q20 9 21 16 L21 18 Z" fill="#6f7278"/><path d="M13.5 9 L14.5 14 L15.5 9Z" fill="#fff"/>
<circle cx="8" cy="8.5" r="3.6" fill="#e4c8b4"/><path d="M4.4 8 Q4 3.8 8 4 Q12 3.8 11.6 8 Q10.5 5.8 8 6 Q5.5 5.8 4.4 8Z" fill="#1f2328"/>
<path d="M0 23 Q0 13.5 8 13 Q16 13.5 16 23 Z" fill="#5d6066"/><path d="M6.3 13.2 L8 23 L9.7 13.2Z" fill="#fff"/><path d="M7.4 15 L8 22 L8.6 15Z" fill="#c8262e"/>
<circle cx="18.5" cy="16" r="2.4" fill="#e4c8b4"/><path d="M16 15.5 Q18.5 12.5 21 15.5Z" fill="#3a2e28"/>
<path d="M13.5 24.5 Q13.5 19 18.5 19 Q23.5 19 23.5 24.5Z" fill="#3f86d8"/></svg>
<svg class="a" style="left:275px;top:44px" width="23" height="24" viewBox="0 0 23 24">
<path d="M2 5 L5 1.5 L20 1.5 L21 4.5 L21 16 L2 16Z" fill="#d9b592"/><path d="M2 5 L21 4.5" stroke="#c49a74"/><path d="M10 1.5 L13 1.5 L11 5 L11 8 L9 8Z" fill="#8c6440"/><path d="M16.5 4.5 L21 4.5 L21 16 L17 16Z" fill="#c9a27e"/>
<circle cx="14.5" cy="10.5" r="2.5" fill="#e06060" opacity="0.8"/><path d="M5 10v3M7 10v3" stroke="#6a4a30"/>
<path d="M0.5 16.5 Q2 18.5 6 20 L16 22 Q21 22 22.5 19 L17 17.5 L10 17.5 Q6 16 0.5 16.5Z" fill="#e2c8b8" stroke="#f0e6e0" stroke-width="0.7"/><path d="M7 18.5 L14 19" stroke="#6d7fa0" stroke-width="1.2"/></svg>
<svg class="a" style="left:333px;top:45px" width="21" height="22" viewBox="0 0 21 22">
<rect x="1" y="0.5" width="16" height="21" fill="#b89070" stroke="#8a7068" stroke-width="0.8"/><rect x="1" y="0.5" width="2.5" height="21" fill="#9c7656"/>
<rect x="17" y="2.5" width="2.5" height="4" fill="#3aa58a"/><rect x="17" y="8" width="2.5" height="4" fill="#d85450"/><rect x="17" y="13.5" width="2.5" height="4" fill="#3a8ec8"/>
<circle cx="9.8" cy="8" r="3" fill="#f2f2f2"/><path d="M4.5 16.5 Q4.5 11.5 9.8 11.5 Q15 11.5 15 16.5Z" fill="#f2f2f2"/></svg>
<svg class="a" style="left:358px;top:45px" width="24" height="23" viewBox="0 0 24 23">
<rect x="0.5" y="4" width="18.5" height="18.5" fill="#dfe6f0" stroke="#eef6ff" stroke-width="1"/><path d="M4 18 L17 15.5 L17 18Z" fill="#c8ccd2"/>
<path d="M6.5 16.5 L20 2.5 L22.5 4.5 L9 18.5 L5.5 19.5Z" fill="#f0c040" stroke="#d8a020" stroke-width="0.6"/><path d="M20 2.5 L21.5 1 L23.5 3 L22.5 4.5Z" fill="#d84050"/><path d="M5.5 19.5 L6.5 16.5 L9 18.5Z" fill="#777"/></svg>
<svg class="a" style="left:389px;top:45px" width="19" height="22" viewBox="0 0 19 22">
<rect x="0.5" y="2.5" width="18" height="19" rx="1" fill="#6a6e76"/><rect x="2" y="4" width="15" height="16" fill="#fcfbf6"/>
<rect x="5" y="1" width="9" height="3.5" rx="1" fill="#f2c040"/><circle cx="9.5" cy="1.8" r="1.2" fill="#333"/>
<path d="M4 8.5h11M4 11.5h11M4 14.5h11M4 17.5h11" stroke="#8a8a8a" stroke-width="1"/></svg>
<svg class="a" style="left:442px;top:45px" width="23" height="23" viewBox="0 0 23 23">
<circle cx="15.5" cy="7" r="6.8" fill="#f4c24a"/><circle cx="17" cy="5.5" r="1.6" fill="#35659a"/>
<path d="M11.5 10 L1.5 19.5 L3.5 22 L5 20.5 L6.5 21.5 L7.5 19.5 L9 19.5 L9.5 17.5 L14.5 12.5Z" fill="#f4c24a"/></svg>
<svg class="a" style="left:504px;top:46px" width="25" height="23" viewBox="0 0 25 23">
<rect x="0.5" y="0.5" width="21" height="16" fill="#d8dce4" stroke="#a8b4d0"/><rect x="1" y="1" width="20" height="9" fill="#4a5ea8"/>
<path d="M3 3.5h7M3 6h6M10 6v2.5H3M12.5 3.5v5h6v-5Z" stroke="#d8dcf0" stroke-width="1.4" fill="none"/>
<path d="M1 16 L11 10 L21 16Z" fill="#c4c6cc"/><circle cx="19.5" cy="17.5" r="5" fill="#4a8ee0"/><text x="19.5" y="21" font-family="Liberation Sans" font-weight="bold" font-size="8" fill="#fff" text-anchor="middle">?</text></svg>
<div class="a" id="sb"><div class="sp" style="left:8px;width:415px"></div><div class="sp" style="left:431px;width:416px"></div><div class="sp" style="left:856px;width:410px"></div><div class="t d" style="left:11px;top:4px;transform:scaleX(0.89)">Fecha del Movimiento</div></div>
<div class="a" style="left:700px;top:152px;width:308px;height:250px;background:#282527"></div>
<div class="a" style="left:700px;top:165px;width:295px;height:230px;border:6px solid #fdfdfd;border-left:none;border-bottom:none"></div>
<div class="a" style="left:930px;top:205px;width:44px;height:14px;background:linear-gradient(90deg,#8fb4e8,#c6dcf5);clip-path:polygon(0 0,90% 0,100% 100%,0 100%)"></div>
<div class="a" style="left:930px;top:220px;width:44px;height:45px;background:linear-gradient(135deg,#e8f2fc,#aecbef 60%,#d8e6f4);border-radius:0 12px 12px 0;box-shadow:inset -2px -2px 2px rgba(60,70,90,0.5)"></div>
<div class="a" style="left:930px;top:248px;width:12px;height:3px;background:#333"></div>
<div class="a" style="left:930px;top:297px;width:27px;height:15px;background:linear-gradient(#9fc0ea,#c8dcf4)"></div>
<div class="win" style="left:108px;top:84px;width:734px;height:477px">
<div class="wt"><div class="t">Examinando el archivo de Proveedores</div></div></div><svg class="a" style="left:113px;top:89px" width="16" height="15" viewBox="0 0 16 15"><rect x="1.7" y="1.7" width="12" height="8" fill="#c4f2e2" stroke="#3a9a80" stroke-width="1.4"/><path d="M6.5 3.5 Q9.5 3 8.5 6.5" stroke="#3a9a80" stroke-width="1.2" fill="none"/><ellipse cx="5" cy="7.8" rx="3.6" ry="1.9" fill="#f6cc5a"/><ellipse cx="5" cy="10" rx="3.8" ry="2" fill="#eebb48"/><ellipse cx="5" cy="12.2" rx="3.8" ry="2" fill="#f2c452"/><path d="M3 10h4M3 12.2h4" stroke="#fbe39a" stroke-width="0.8"/></svg><div class="xb" style="left:807px;top:88px"><svg width="12" height="10" viewBox="0 0 12 10"><path d="M2.2 2 L9.8 8 M9.8 2 L2.2 8" stroke="#474c55" stroke-width="4.2" stroke-linecap="round"/><path d="M2.2 2 L9.8 8 M9.8 2 L2.2 8" stroke="#ececec" stroke-width="2.4" stroke-linecap="round"/></svg></div>
<div class="panel" style="left:117px;top:132px;width:722px;height:392px"></div>
<div class="tab" style="left:117px;top:111px;width:71px;height:22px;background:#f0f0f0"></div>
<div class="t d" style="left:123px;top:115px;">Por Nombre</div>
<div class="t" style="right:427px;top:116px;font-weight:bold;font-size:11.5px;letter-spacing:0.1px">Ctrl-B: Buscar - F3: Próximo...</div>
<div class="chk" style="left:119px;top:142px"></div><svg class="a" style="left:121px;top:144px" width="8" height="8" viewBox="0 0 8 8"><path d="M0.8 3.6 L3 6 L7.4 1.2" stroke="#000" stroke-width="2" fill="none"/></svg>
<div class="t d" style="left:137px;top:142px;">Solo Proveedores Activos</div>
<div class="chk" style="left:287px;top:142px"></div>
<div class="t d" style="left:306px;top:142px;">Solo Proveedores Favoritos</div>
<div class="t d" style="left:660px;top:138px;">Nombre:</div>
<div class="grid" style="left:125px;top:160px;width:705px;height:323px"></div>
<div class="hd" style="left:127px;top:161px;width:36px;height:14px"><div class="t d" style="position:static;transform-origin:50% 0;margin-top:0">Cód.</div></div><div class="hd" style="left:163px;top:161px;width:168px;height:14px"><div class="t d" style="position:static;transform-origin:50% 0;margin-top:0">Nombre</div></div><div class="hd" style="left:331px;top:161px;width:149px;height:14px"><div class="t d" style="position:static;transform-origin:50% 0;margin-top:0">Domicilio</div></div><div class="hd" style="left:480px;top:161px;width:120px;height:14px"><div class="t d" style="position:static;transform-origin:50% 0;margin-top:0">Localidad</div></div><div class="hd" style="left:600px;top:161px;width:122px;height:14px"><div class="t d" style="position:static;transform-origin:50% 0;margin-top:0">Teléfono:</div></div><div class="hd" style="left:722px;top:161px;width:107px;height:14px"><div class="t d" style="position:static;transform-origin:50% 0;margin-top:0">Saldo C.C.</div></div>
<div class="vl" style="left:163px;top:175px;height:306px"></div>
<div class="vl" style="left:331px;top:175px;height:306px"></div>
<div class="vl" style="left:480px;top:175px;height:306px"></div>
<div class="vl" style="left:600px;top:175px;height:306px"></div>
<div class="vl" style="left:722px;top:175px;height:306px"></div>
<div class="sel" style="left:127px;top:189px;width:702px;height:13px"></div>
<div class="t d dr" style="right:1101px;top:176px;">2</div><div class="t d" style="left:166px;top:176px;">Distribuidora Perez</div><div class="t d" style="left:333px;top:176px;">Alberdi 223</div><div class="t d" style="left:483px;top:176px;">Firmat</div><div class="t d dr" style="right:541.5px;top:176px;transform:scaleX(0.89)">034654552222</div><div class="t d dr" style="right:435px;top:176px;">$(200.00)</div>
<div class="t d dr" style="right:1101px;top:189px;color:#fff">1</div><div class="t d" style="left:166px;top:189px;color:#fff">Soluciones Digitales</div><div class="t d" style="left:333px;top:189px;color:#fff">Pueyrredon 925</div><div class="t d" style="left:483px;top:189px;color:#fff">Firmat</div><div class="t d dr" style="right:541.5px;top:189px;color:#fff;transform:scaleX(0.89)">03465 430404</div><div class="t d dr" style="right:435px;top:189px;color:#fff">$444.00</div>
<div class="btn" style="left:117px;top:526px;width:78px;height:23px"></div>
<svg class="a" style="left:120px;top:530px" width="17" height="14" viewBox="0 0 17 14"><rect x="0.5" y="0.5" width="11" height="12" fill="#f4f6fa" stroke="#9aa6b8"/><rect x="0.5" y="0.5" width="11" height="3" fill="#5b84c4"/><path d="M0.5 7H11.5M0.5 10H11.5M4.5 3.5V12.5M8 3.5V12.5" stroke="#b4bccb"/><path d="M7 8.5H13.5" stroke="#d9502f" stroke-width="2"/><path d="M12 5.5L15.5 8.5L12 11.5Z" fill="#d9502f"/></svg>
<div class="t d" style="left:144px;top:531px;">E<u>x</u>portar</div>
<div class="win" style="left:376px;top:196px;width:569px;height:369px">
<div class="wt"><div class="t">Actualizando un registro de Proveedores</div></div></div><svg class="a" style="left:381px;top:201px" width="16" height="15" viewBox="0 0 16 15"><rect x="1.7" y="1.7" width="12" height="8" fill="#c4f2e2" stroke="#3a9a80" stroke-width="1.4"/><path d="M6.5 3.5 Q9.5 3 8.5 6.5" stroke="#3a9a80" stroke-width="1.2" fill="none"/><ellipse cx="5" cy="7.8" rx="3.6" ry="1.9" fill="#f6cc5a"/><ellipse cx="5" cy="10" rx="3.8" ry="2" fill="#eebb48"/><ellipse cx="5" cy="12.2" rx="3.8" ry="2" fill="#f2c452"/><path d="M3 10h4M3 12.2h4" stroke="#fbe39a" stroke-width="0.8"/></svg><div class="xb" style="left:910px;top:200px"><svg width="12" height="10" viewBox="0 0 12 10"><path d="M2.2 2 L9.8 8 M9.8 2 L2.2 8" stroke="#474c55" stroke-width="4.2" stroke-linecap="round"/><path d="M2.2 2 L9.8 8 M9.8 2 L2.2 8" stroke="#ececec" stroke-width="2.4" stroke-linecap="round"/></svg></div>
<div class="panel" style="left:384px;top:244px;width:556px;height:285px"></div>
<div class="tab" style="left:385px;top:226px;width:45px;height:19px;border-right:none"></div>
<div class="t d" style="left:388px;top:229px;">General</div>
<div class="tab" style="left:599px;top:225px;width:37px;height:20px"></div>
<div class="t d" style="left:602px;top:229px;">Notas</div>
<div class="tab" style="left:430px;top:223px;width:170px;height:23px;background:#f0f0f0"></div>
<div class="t d" style="left:435px;top:226.5px;">Cuenta Corriente de Proveedores</div>
<div class="grid" style="left:391px;top:269px;width:546px;height:228px"></div>
<div class="hd" style="left:393px;top:270px;width:71px;height:15px"><div class="t d" style="position:static;transform-origin:50% 0;margin-top:0">Fecha</div></div><div class="hd" style="left:464px;top:270px;width:208px;height:15px"><div class="t d" style="position:static;transform-origin:50% 0;margin-top:0">Concepto</div></div><div class="hd" style="left:672px;top:270px;width:16px;height:15px"><div class="t d" style="position:static;transform-origin:50% 0;margin-top:0">T</div></div><div class="hd" style="left:688px;top:270px;width:19px;height:15px"><div class="t d" style="position:static;transform-origin:50% 0;margin-top:0">M</div></div><div class="hd" style="left:707px;top:270px;width:69px;height:15px"><div class="t d" style="position:static;transform-origin:50% 0;margin-top:0">Debe</div></div><div class="hd" style="left:776px;top:270px;width:69px;height:15px"><div class="t d" style="position:static;transform-origin:50% 0;margin-top:0">Haber</div></div><div class="hd" style="left:845px;top:270px;width:90px;height:15px"><div class="t d" style="position:static;transform-origin:50% 0;margin-top:0">Saldo</div></div>
<div class="vl" style="left:464px;top:285px;height:210px"></div>
<div class="vl" style="left:672px;top:285px;height:210px"></div>
<div class="vl" style="left:688px;top:285px;height:210px"></div>
<div class="vl" style="left:707px;top:285px;height:210px"></div>
<div class="vl" style="left:776px;top:285px;height:210px"></div>
<div class="vl" style="left:845px;top:285px;height:210px"></div>
<div class="sel" style="left:393px;top:311px;width:542px;height:13px"></div>
<div class="t d dr" style="right:799.5px;top:285px;;transform:scaleX(0.97)">07/02/2012</div><div class="t d" style="left:467px;top:285px;">Compra de Software - Historias Clinicas</div><div class="t d" style="left:677px;top:285px;">E</div><div class="t d" style="left:695px;top:285px;">$</div><div class="t d dr" style="right:492px;top:285px;">$0.00</div><div class="t d dr" style="right:423px;top:285px;">$360.00</div><div class="t d dr" style="right:330px;top:285px;color:#c00000">$(360.00)</div>
<div class="t d dr" style="right:799.5px;top:298px;;transform:scaleX(0.97)">27/02/2012</div><div class="t d" style="left:467px;top:298px;">Pago</div><div class="t d" style="left:677px;top:298px;">S</div><div class="t d" style="left:695px;top:298px;">$</div><div class="t d dr" style="right:492px;top:298px;">$360.00</div><div class="t d dr" style="right:423px;top:298px;">$0.00</div><div class="t d dr" style="right:330px;top:298px;">$0.00</div>
<div class="t d dr" style="right:799.5px;top:311px;color:#fff;transform:scaleX(0.97)">03/12/2012</div><div class="t d" style="left:467px;top:311px;color:#fff">Compra Modificaciones</div><div class="t d" style="left:677px;top:311px;color:#fff">E</div><div class="t d" style="left:695px;top:311px;color:#fff">$</div><div class="t d dr" style="right:492px;top:311px;color:#fff">$10.00</div><div class="t d dr" style="right:423px;top:311px;color:#fff">$0.00</div><div class="t d dr" style="right:330px;top:311px;color:#fff">$(10.00)</div>
<div class="t d dr" style="right:799.5px;top:324px;;transform:scaleX(0.97)">11/09/2013</div><div class="t d" style="left:467px;top:324px;">Pago</div><div class="t d" style="left:677px;top:324px;">S</div><div class="t d" style="left:695px;top:324px;">$</div><div class="t d dr" style="right:492px;top:324px;">$0.00</div><div class="t d dr" style="right:423px;top:324px;">$0.00</div><div class="t d dr" style="right:330px;top:324px;">$0.00</div>
<div class="btn" style="left:391px;top:503px;width:77px;height:23px"></div>
<svg class="a" style="left:394px;top:507px" width="17" height="14" viewBox="0 0 17 14"><rect x="0.5" y="0.5" width="11" height="12" fill="#f4f6fa" stroke="#9aa6b8"/><rect x="0.5" y="0.5" width="11" height="3" fill="#5b84c4"/><path d="M0.5 7H11.5M0.5 10H11.5M4.5 3.5V12.5M8 3.5V12.5" stroke="#b4bccb"/><path d="M7 8.5H13.5" stroke="#d9502f" stroke-width="2"/><path d="M12 5.5L15.5 8.5L12 11.5Z" fill="#d9502f"/></svg>
<div class="t d" style="left:418px;top:508px;">E<u>x</u>portar</div>
<div class="win" style="left:602px;top:308px;width:511px;height:323px">
<div class="wt"><div class="t">Actualizando un registro de C. C. de Proveedores</div></div></div><svg class="a" style="left:607px;top:313px" width="16" height="15" viewBox="0 0 16 15"><rect x="1.7" y="1.7" width="12" height="8" fill="#c4f2e2" stroke="#3a9a80" stroke-width="1.4"/><path d="M6.5 3.5 Q9.5 3 8.5 6.5" stroke="#3a9a80" stroke-width="1.2" fill="none"/><ellipse cx="5" cy="7.8" rx="3.6" ry="1.9" fill="#f6cc5a"/><ellipse cx="5" cy="10" rx="3.8" ry="2" fill="#eebb48"/><ellipse cx="5" cy="12.2" rx="3.8" ry="2" fill="#f2c452"/><path d="M3 10h4M3 12.2h4" stroke="#fbe39a" stroke-width="0.8"/></svg><div class="xb" style="left:1078px;top:312px"><svg width="12" height="10" viewBox="0 0 12 10"><path d="M2.2 2 L9.8 8 M9.8 2 L2.2 8" stroke="#474c55" stroke-width="4.2" stroke-linecap="round"/><path d="M2.2 2 L9.8 8 M9.8 2 L2.2 8" stroke="#ececec" stroke-width="2.4" stroke-linecap="round"/></svg></div>
<div class="panel" style="left:614px;top:361px;width:494px;height:237px"></div>
<div class="tab" style="left:614px;top:341px;width:50px;height:21px;background:#f0f0f0"></div>
<div class="t d" style="left:619px;top:344px;">General</div>
<div class="t d" style="left:617px;top:368px;">Proveedor:</div>
<div class="t d" style="left:619px;top:387px;">Fecha:</div>
<div class="t d" style="left:619px;top:407px;">Concepto:</div>
<div class="t d" style="left:619px;top:426px;">Tipo:</div>
<div class="t d" style="left:619px;top:446px;">Medio:</div>
<div class="t d" style="left:619px;top:465px;">Monto Inic.:</div>
<div class="t d" style="left:619px;top:485px;">Cotización:</div>
<div class="t d" style="left:619px;top:504px;">Monto:</div>
<div class="t d" style="left:680px;top:368px;">Soluciones Digitales</div>
<div class="inp" style="left:676px;top:386px;width:78px;height:16px"></div><div class="t d dr" style="right:510.5px;top:387.7px;transform:scaleX(0.97)">03/12/2012</div>
<svg class="a" style="left:760px;top:388px" width="16" height="16" viewBox="0 0 16 16"><rect x="1" y="2" width="14" height="13" fill="#fff" stroke="#6a7a8c"/><rect x="1" y="2" width="14" height="4" fill="#1f4a7c"/><path d="M3 8h10M3 10.5h10M3 13h10M5 6v8M8 6v8M11 6v8" stroke="#b8404a" stroke-width="0.8"/><path d="M4 0.5v3M12 0.5v3" stroke="#555" stroke-width="1.2"/></svg>
<div class="inp" style="left:676px;top:406px;width:330px;height:16px"></div><div class="t d" style="left:680px;top:408px;">Compra Modificaciones</div>
<div class="inp" style="left:676px;top:426px;width:95px;height:15px"></div><div class="t d" style="left:679px;top:428px;">Entrada</div>
<div class="btn" style="left:759px;top:428px;width:11px;height:11px"></div><svg class="a" style="left:761px;top:432px" width="7" height="4"><path d="M0 0h7L3.5 4z" fill="#000"/></svg>
<div class="inp" style="left:676px;top:445px;width:39px;height:15px"></div><div class="t d dr" style="right:551px;top:447px;">2</div>
<svg class="a" style="left:721px;top:446px" width="15" height="15" viewBox="0 0 15 15"><circle cx="7.5" cy="7.5" r="7" fill="#3b82d6"/><circle cx="7.5" cy="7.5" r="6" fill="#4b94e4"/><text x="7.5" y="11.5" font-family="Liberation Sans" font-weight="bold" font-size="11" fill="#fff" text-anchor="middle">?</text></svg>
<div class="t d" style="left:744px;top:446px;">F2  Dolar</div>
<div class="inp" style="left:676px;top:465px;width:78px;height:15px"></div><div class="t d dr" style="right:512px;top:467px;">$10.00</div>
<div class="inp" style="left:676px;top:485px;width:78px;height:15px"></div><div class="t d dr" style="right:512px;top:487px;">$5.52</div>
<div class="t d dr" style="right:511px;top:505px;">$55.20</div>
<div class="a" style="left:620px;top:530px;width:481px;height:61px;border:1px solid;border-color:#a0a0a0 #fff #fff #a0a0a0;box-shadow:inset 1px 1px 0 #fff, 1px 1px 0 #a0a0a0"></div>
<div class="a" style="left:627px;top:526px;width:36px;height:12px;background:#f0f0f0"></div><div class="t d" style="left:629px;top:524px;">Notas:</div>
<div class="grid" style="left:625px;top:539px;width:469px;height:45px"></div>
<div class="a" style="left:1077px;top:541px;width:16px;height:41px;background:#f0f0f0"></div>
<svg class="a" style="left:1081px;top:545px" width="8" height="5"><path d="M0 5h8L4 0z" fill="#909090"/></svg><svg class="a" style="left:1081px;top:572px" width="8" height="5"><path d="M0 0h8L4 5z" fill="#909090"/></svg>
<div class="a" style="left:944px;top:602px;width:81px;height:23px;border:1px solid #4a4a4a"></div><div class="btn" style="left:945px;top:603px;width:79px;height:21px"></div>
<svg class="a" style="left:948px;top:605px" width="16" height="16" viewBox="0 0 16 16"><circle cx="8" cy="8" r="7.5" fill="#3bb28c"/><path d="M4.5 8.2L7 10.7L11.5 5.5" stroke="#fff" stroke-width="2" fill="none"/></svg>
<div class="t d" style="left:971px;top:607px;"><u>O</u>K</div>
<div class="btn" style="left:1028px;top:602px;width:81px;height:23px"></div>
<svg class="a" style="left:1032px;top:605px" width="16" height="16" viewBox="0 0 16 16"><circle cx="8" cy="8" r="7.5" fill="#d9464f"/><path d="M5 5L11 11M11 5L5 11" stroke="#fff" stroke-width="2"/></svg>
<div class="t d" style="left:1056px;top:607px;"><u>C</u>ancelar</div></body></html>
